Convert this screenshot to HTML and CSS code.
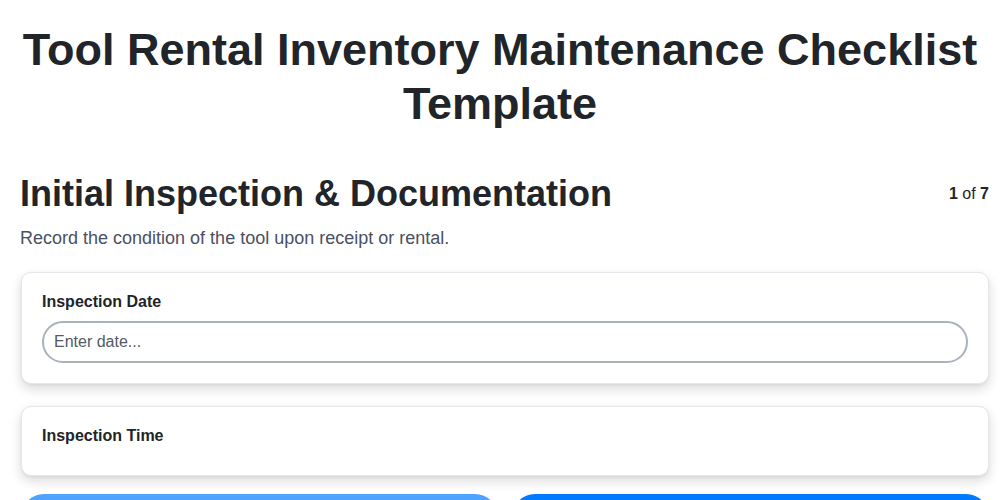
FILE: index.html
```html
<!DOCTYPE html>
<html lang="en">
<head>
  <meta charset="UTF-8">
  <meta name="viewport" content="width=device-width, initial-scale=1.0">
  <title>Tool Rental Inventory Maintenance Checklist Template</title>
  <link rel="stylesheet" href="styles.css">
</head>
<body>
  <div class="checklist" id="tool_rental_checklist">
    <h1 class="checklist__title">Tool Rental Inventory Maintenance Checklist Template</h1>

    <div class="checklist-step">
      <div class="checklist-step__header">
        <h2 class="checklist-step__title">Initial Inspection &amp; Documentation</h2>
        <div class="checklist-step__count"><b>1</b> of <b>7</b></div>
      </div>
      <p class="checklist-step__desc">Record the condition of the tool upon receipt or rental.</p>

      <div class="checklist-card">
        <label class="checklist-card__label" for="inspection_date">Inspection Date</label>
        <input class="checklist-card__input" id="inspection_date" type="text" placeholder="Enter date...">
      </div>

      <div class="checklist-card">
        <label class="checklist-card__label">Inspection Time</label>
      </div>

      <div class="checklist-nav">
        <button class="checklist-button checklist-button--prev" aria-label="Previous" disabled></button>
        <button class="checklist-button checklist-button--next" aria-label="Next"></button>
      </div>
    </div>
  </div>
</body>
</html>
```

FILE: styles.css
```css
/* General styles */
body {
  margin: 0;
  background: #fff;
  font-family: "Liberation Sans", Arial, sans-serif;
  color: #212529;
}

#tool_rental_checklist .checklist__title {
  font-size: 45px;
  font-weight: 700;
  text-align: center;
  margin: 23px 0 0;
  padding: 0 20px;
  line-height: 1.2;
}

#tool_rental_checklist .checklist-step {
  padding: 41px 11px 0 20px;
}

#tool_rental_checklist .checklist-step__header {
  display: flex;
  justify-content: space-between;
  align-items: center;
}

#tool_rental_checklist .checklist-step__title {
  font-size: 36px;
  font-weight: 700;
  margin: 0;
  line-height: 1.2;
}

#tool_rental_checklist .checklist-step__count {
  font-size: 16px;
  color: #212529;
}

#tool_rental_checklist .checklist-step__desc {
  font-size: 18px;
  color: #4a5161;
  margin: 13px 0 23px;
}

#tool_rental_checklist .checklist-card {
  background: #fff;
  border: 1px solid #e6e6ec;
  border-radius: 10px;
  box-shadow: 0 5px 12px rgba(0, 0, 0, .15), 0 1px 3px rgba(0, 0, 0, .05);
  padding: 20px;
  margin: 0 0 22px 1px;
}

#tool_rental_checklist .checklist-card__label {
  display: block;
  font-size: 16px;
  font-weight: 700;
  margin-bottom: 10px;
}

#tool_rental_checklist .checklist-card__input {
  display: block;
  width: 100%;
  box-sizing: border-box;
  height: 42px;
  padding: 10px;
  border: 2px solid #aab2bb;
  border-radius: 999px;
  font-family: inherit;
  font-size: 16px;
  color: #212529;
  outline: 0;
}

#tool_rental_checklist .checklist-card__input::placeholder {
  color: #555a64;
}

#tool_rental_checklist .checklist-nav {
  display: flex;
  gap: 14px;
  margin: -4px 0 0 1px;
}

#tool_rental_checklist .checklist-button {
  flex: 1;
  height: 46px;
  border: none;
  border-radius: 999px;
  background-color: #007bff;
  cursor: pointer;
}

#tool_rental_checklist .checklist-button--prev {
  background-color: #4da3ff;
  cursor: default;
}
```
